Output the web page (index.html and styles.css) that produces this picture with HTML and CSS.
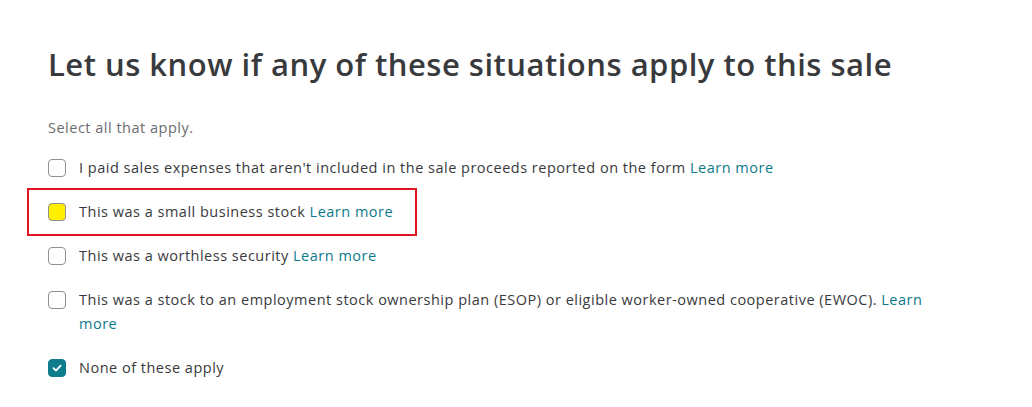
FILE: index.html
```html
<!DOCTYPE html>
<html lang="en">
<head>
    <meta charset="UTF-8">
    <title>Sale situations</title>
    <link rel="stylesheet" href="styles.css">
</head>
<body>
    <div class="container">
        <h1>Let us know if any of these situations apply to this sale</h1>
        <p class="hint">Select all that apply.</p>

        <div class="options">
            <label class="option">
                <span class="box"></span>
                <span class="text">I paid sales expenses that aren't included in the sale proceeds reported on the form <a href="#">Learn more</a></span>
            </label>
            <div class="highlight">
                <label class="option">
                    <span class="box yellow"></span>
                    <span class="text">This was a small business stock <a href="#">Learn more</a></span>
                </label>
            </div>
            <label class="option">
                <span class="box"></span>
                <span class="text">This was a worthless security <a href="#">Learn more</a></span>
            </label>
            <label class="option">
                <span class="box"></span>
                <span class="text">This was a stock to an employment stock ownership plan (ESOP) or eligible worker-owned cooperative (EWOC). <a href="#">Learn more</a></span>
            </label>
            <label class="option">
                <span class="box checked">
                    <svg width="12" height="12" viewBox="0 0 12 12"><path d="M2.5 6.2 L5 8.6 L9.6 3.6" fill="none" stroke="#fff" stroke-width="1.8" stroke-linecap="round" stroke-linejoin="round"/></svg>
                </span>
                <span class="text">None of these apply</span>
            </label>
        </div>
    </div>
</body>
</html>
```

FILE: styles.css
```css
body {
    margin: 0;
    background: #ffffff;
    font-family: "Open Sans", "Noto Sans", sans-serif;
    color: #393a3d;
}

.container {
    width: 900px;
    padding: 38px 0 0 48px;
}

h1 {
    margin: 0;
    font-size: 31px;
    font-weight: 600;
    line-height: 52px;
    letter-spacing: 0.5px;
    color: #393a3d;
}

.hint {
    margin: 28px 0 0 0;
    font-size: 14.5px;
    line-height: 20px;
    letter-spacing: 0.5px;
    color: #6b6c72;
}

.options {
    display: flex;
    flex-direction: column;
    gap: 20px;
    margin-top: 18px;
}

.option {
    display: flex;
    align-items: flex-start;
    gap: 13px;
    font-size: 14.5px;
    line-height: 24px;
    letter-spacing: 0.5px;
    cursor: pointer;
}

.box {
    flex: none;
    width: 16px;
    height: 16px;
    margin-top: 3px;
    border: 1px solid #8d9096;
    border-radius: 4px;
    background: #fff;
    display: flex;
    align-items: center;
    justify-content: center;
}

.box.yellow {
    background: #ffef00;
}

.box.checked {
    background: #0d7d8c;
    border-color: #0d7d8c;
}

a {
    color: #0d7a8a;
    text-decoration: none;
}

.highlight {
    margin: -12px 0 -12px -21px;
    width: 367px;
    padding: 10px 0 10px 19px;
    border: 2px solid #e0161f;
}
```
